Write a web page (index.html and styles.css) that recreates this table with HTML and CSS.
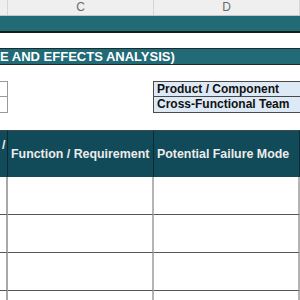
FILE: index.html
```html
<!DOCTYPE html>
<html>
<head>
<meta charset="utf-8">
<link rel="stylesheet" href="styles.css">
</head>
<body>
<div class="sheet">
  <div class="colhead">
    <div class="ch"></div>
    <div class="ch">C</div>
    <div class="ch">D</div>
  </div>
  <div class="band"></div>
  <div class="title">E AND EFFECTS ANALYSIS)</div>
  <div class="meta">
    <div class="box"></div>
    <div class="gap"></div>
    <div class="label">Product / Component</div>
    <div class="box"></div>
    <div class="gap"></div>
    <div class="label">Cross-Functional Team</div>
  </div>
  <div class="table">
    <div class="th th-first"><span class="tail">/</span></div>
    <div class="th">Function / Requirement</div>
    <div class="th">Potential Failure Mode</div>
    <div class="td"></div><div class="td"></div><div class="td"></div>
    <div class="td"></div><div class="td"></div><div class="td"></div>
    <div class="td"></div><div class="td"></div><div class="td"></div>
    <div class="td"></div><div class="td"></div><div class="td"></div>
  </div>
</div>
</body>
</html>
```
FILE: styles.css
```css
html, body {
  margin: 0;
  padding: 0;
  background: #ffffff;
}
.sheet {
  width: 300px;
  height: 300px;
  overflow: hidden;
  font-family: "Liberation Sans", Arial, sans-serif;
}
.colhead {
  display: grid;
  grid-template-columns: 8px 146px 1fr;
  height: 15px;
  background: #efefef;
  border-bottom: 1px solid #c6c6c6;
}
.ch {
  border-right: 1px solid #d6d6d6;
  color: #6a6a6a;
  font-size: 12px;
  line-height: 15px;
  text-align: center;
}
.band {
  height: 15px;
  background: #216b77;
  border-bottom: 2px solid #1b1b1b;
}
.title {
  margin-top: 15px;
  height: 15px;
  background: #216b77;
  border-top: 1px solid #1e2a2c;
  border-bottom: 1px solid #1e2a2c;
  color: #ffffff;
  font-weight: bold;
  font-size: 13px;
  line-height: 16px;
  white-space: nowrap;
}
.meta {
  margin-top: 16px;
  display: grid;
  grid-template-columns: 8px 145px 1fr;
  grid-auto-rows: 16px;
}
.box {
  border: 1px solid #9a9a9a;
  border-left: none;
  background: #ffffff;
}
.box + .gap + .label + .box {
  border-top: none;
}
.label {
  background: #dde9f5;
  border: 1px solid #4a4a4a;
  border-right: none;
  font-weight: bold;
  font-size: 12px;
  line-height: 15px;
  padding-left: 3px;
  color: #111111;
  white-space: nowrap;
}
.label + .box + .gap + .label {
  border-top: none;
}
.table {
  margin-top: 17px;
  display: grid;
  grid-template-columns: 8px 146px 1fr;
  grid-template-rows: 47px repeat(4, 38px);
}
.th {
  background: #114b59;
  border-top: 1px solid #3b4a4e;
  border-right: 1px solid #0a2b33;
  color: #ececec;
  font-weight: bold;
  font-size: 12.4px;
  display: flex;
  align-items: center;
  padding-left: 3px;
  white-space: nowrap;
}
.th-first {
  padding-left: 2px;
  align-items: flex-start;
}
.tail {
  margin-top: 7px;
}
.td {
  border-right: 2px solid #b4b4b4;
  border-bottom: 1px solid #555555;
  background: #ffffff;
}
.td:nth-child(3n+1) {
  border-right-color: #a8a8a8;
}
```
